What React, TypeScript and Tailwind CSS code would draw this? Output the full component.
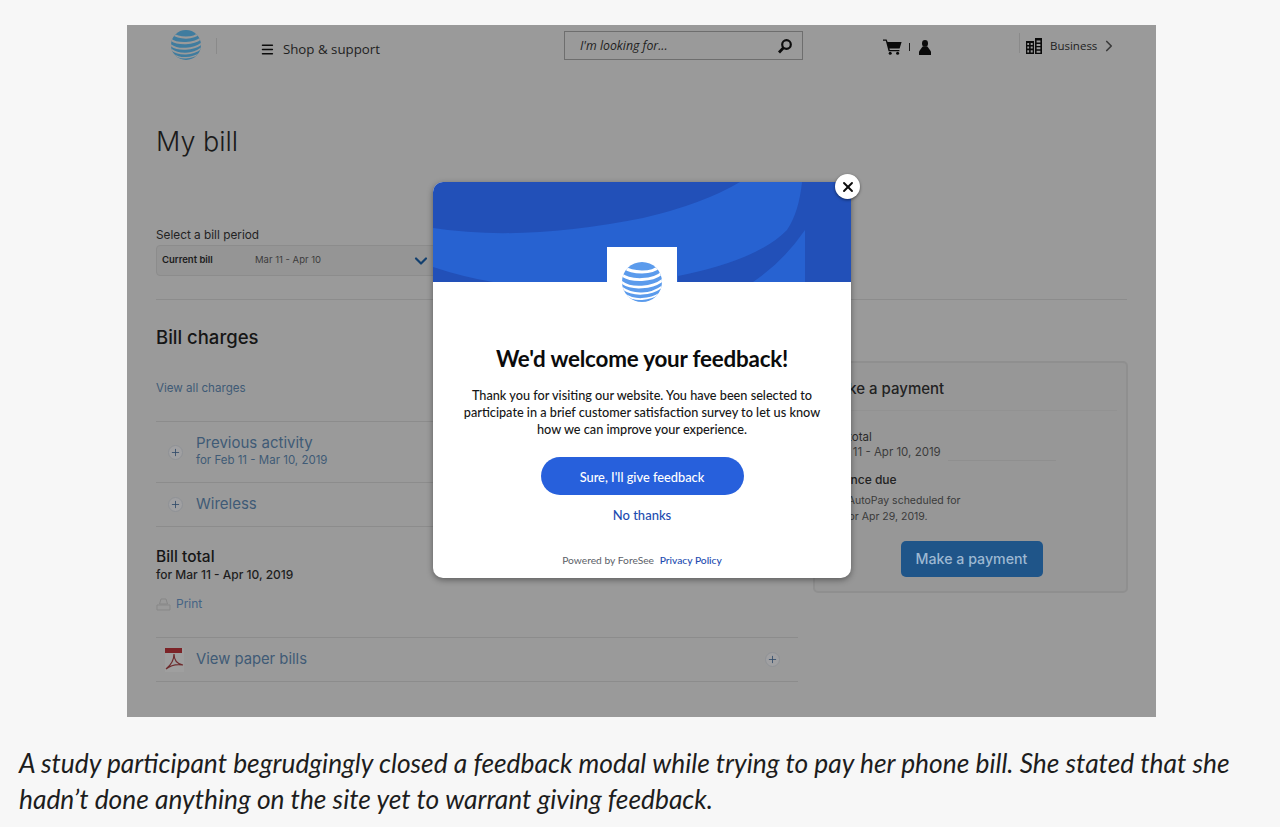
import React from "react";
import { Menu, Plus, ChevronDown, ChevronRight, X } from "lucide-react";

function Globe({ color, gap, size, id }: { color: string; gap: string; size: number; id: string }) {
  return (
    <svg width={size} height={size} viewBox="0 0 40 40" className="shrink-0">
      <defs>
        <clipPath id={id}><circle cx="20" cy="20" r="20" /></clipPath>
      </defs>
      <g clipPath={`url(#${id})`}>
        <rect width="40" height="40" fill={color} />
        <g fill="none" stroke={gap}>
          <path d="M2 5 Q8 10 20 10 Q32 10 38 4" strokeWidth="3" />
          <path d="M-1 12 Q5 18 20 17.5 Q34 17 41 10" strokeWidth="2.8" />
          <path d="M-2 19 Q6 26 20 25 Q34 24 42 17" strokeWidth="2.6" />
          <path d="M0 26 Q8 32 20 31.5 Q32 31 41 24" strokeWidth="2.2" />
          <path d="M2 32 Q10 37.5 20 37 Q30 36.5 39 31" strokeWidth="1.8" />
        </g>
      </g>
    </svg>
  );
}

function PlusCircle() {
  return (
    <span className="flex h-[15px] w-[15px] shrink-0 items-center justify-center rounded-full border border-[#8f9296] bg-[#a0a0a2]">
      <Plus size={11} strokeWidth={1.8} color="#2f4a68" />
    </span>
  );
}

function Row({ className, children }: { className: string; children: React.ReactNode }) {
  return <div className={`flex items-center border-b border-[#8c8c8c] ${className}`}>{children}</div>;
}

export default function App() {
  return (
    <div className="h-[827px] w-[1280px] overflow-hidden bg-[#f7f7f7] pt-[25px]">
      <div className="relative ml-[127px] h-[692px] w-[1029px] overflow-hidden bg-[#9a9a9a] font-['Inter',sans-serif] text-[#1c1c1c]">
        {/* top bar */}
        <header className="flex h-[48px] items-start">
          <div className="ml-[44px] mt-[5px]"><Globe color="#3f7c9f" gap="#9a9a9a" size={30} id="g1" /></div>
          <div className="ml-[15px] mt-[13px] h-[16px] w-px bg-[#8a8a8a]" />
          <div className="ml-[43px] mt-[14px] flex w-[120px] items-center font-['Open_Sans',sans-serif]">
            <Menu size={17} strokeWidth={2.4} color="#0c0c0c" />
            <span className="ml-[8px] whitespace-nowrap text-[13.3px] leading-[20px] text-[#1e1e1e]">Shop &amp; support</span>
          </div>
          <div className="ml-[184px] mt-[6px] flex h-[29px] w-[239px] items-center justify-between border border-[#6e6e6e] pl-[15px] pr-[9px] font-['Open_Sans',sans-serif]">
            <span className="mt-[2px] text-[12.3px] italic text-[#1e1e1e]">I'm looking for...</span>
            <svg width="16" height="16" viewBox="0 0 16 16" fill="none" stroke="#0c0c0c" strokeWidth="2.2">
              <circle cx="9.5" cy="6.5" r="4.3" />
              <path d="M6.5 9.8 L2 14.5" strokeWidth="2.8" />
            </svg>
          </div>
          <div className="ml-[80px] mt-[14px] flex items-center">
            <svg width="19" height="16" viewBox="0 0 19 16" fill="#0a0a0a">
              <path d="M0 .5h3.6l1 2.5H18.6l-2 6.6H6.4l.4 1.4h9.6v1.3H5.6L2.8 1.8H0z" />
              <circle cx="7.2" cy="14.3" r="1.5" />
              <circle cx="14.6" cy="14.3" r="1.5" />
            </svg>
            <span className="ml-[7px] h-[8px] w-px bg-[#1a1a1a]" />
            <svg className="ml-[9px]" width="12" height="15" viewBox="0 0 12 15" fill="#0a0a0a">
              <ellipse cx="6" cy="3.4" rx="3" ry="3.4" />
              <path d="M3.6 6.4h4.8L12 11.5V15H0v-3.5z" />
            </svg>
          </div>
          <div className="ml-[88px] mt-[8px] h-[20px] w-px bg-[#8a8a8a]" />
          <div className="ml-[6px] mt-[12px] flex items-center font-['Open_Sans',sans-serif]">
            <svg width="16" height="16" viewBox="0 0 16 16" fill="#0a0a0a">
              <path fillRule="evenodd" d="M0 3h8v13H0zM1.3 5v2h1.8V5zm3.4 0v2h2V5zM1.3 8.6v2h1.8v-2zm3.4 0v2h2v-2zM1.3 12.2v2.2h1.8v-2.2zm3.4 0v2.2h2v-2.2zM9 0h7v16H9zm1.6 2.5v2h3.8v-2zm0 3.4v2h3.8v-2zm0 3.4v2h3.8v-2zm0 3.4v2h3.8v-2z" />
            </svg>
            <span className="ml-[8px] text-[11.5px] text-[#1e1e1e]">Business</span>
            <ChevronRight className="ml-[3px]" size={18} strokeWidth={2.2} color="#3a3a3a" />
          </div>
        </header>

        {/* page */}
        <div className="ml-[29px] w-[971px]">
          <h1 className="mt-[51px] h-[36px] text-[27px] font-light leading-[36px] text-[#1a1a1a]">My bill</h1>
          <div className="mt-[67px] text-[11.8px] leading-[16px] text-[#232323]">Select a bill period</div>
          <div className="mt-[2px] flex h-[31px] w-[290px] items-center rounded-[4px] border border-[#8c8c8c] bg-[#959595] pl-[5px]">
            <span className="w-[93px] shrink-0 whitespace-nowrap text-[9.5px] font-semibold text-[#1c1c1c]">Current bill</span>
            <span className="shrink-0 whitespace-nowrap text-[9.5px] text-[#3c3c3c]">Mar 11 - Apr 10</span>
            <ChevronDown className="ml-[90px] shrink-0" size={20} strokeWidth={2.6} color="#123f6e" />
          </div>
          <div className="mt-[23px] border-t border-[#8c8c8c]" />

          <div className="flex justify-between">
            <div className="w-[642px]">
              <h2 className="mt-[25px] h-[24px] text-[18.5px] font-medium leading-[24px] text-[#161616]">Bill charges</h2>
              <a className="mt-[31px] block h-[16px] text-[11.6px] leading-[16px] text-[#3f5a76]">View all charges</a>
              <Row className="mt-[25px] h-[62px] border-t pl-[12px]">
                <PlusCircle />
                <div className="ml-[13px] -mt-[4px] text-[#3f5a76]">
                  <div className="text-[15px] leading-[19px]">Previous activity</div>
                  <div className="text-[11.5px] leading-[16px]">for Feb 11 - Mar 10, 2019</div>
                </div>
              </Row>
              <Row className="h-[44px] pl-[12px]">
                <PlusCircle />
                <span className="ml-[13px] text-[15px] text-[#3f5a76]">Wireless</span>
              </Row>
              <div className="mt-[20px] text-[15.5px] font-medium leading-[19px] text-[#161616]">Bill total</div>
              <div className="text-[12px] font-medium leading-[17px] text-[#1e1e1e]">for Mar 11 - Apr 10, 2019</div>
              <div className="mt-[13px] flex h-[16px] items-center">
                <svg width="15" height="13" viewBox="0 0 15 13" fill="none" stroke="#878787" strokeWidth="1">
                  <path d="M5 1h5l1.5 5h-8zM1 7h13v5H1z" />
                </svg>
                <span className="ml-[5px] text-[12px] text-[#456485]">Print</span>
              </div>
              <Row className="mt-[25px] h-[45px] border-t pl-[8px] pr-[18px]">
                <svg width="21" height="26" viewBox="0 0 21 26">
                  <rect x="1" y="1" width="19" height="24" fill="#9f9f9f" />
                  <rect x="1" y="1" width="17" height="5" fill="#7c2327" />
                  <path d="M2 22 C7 18 10 12 10 7 C10 13 13 17 19 18 C13 17 7 18 2 22Z" fill="none" stroke="#6e2b2d" strokeWidth="1.2" />
                </svg>
                <span className="ml-[11px] flex-1 text-[14.8px] text-[#3f5a76]">View paper bills</span>
                <PlusCircle />
              </Row>
            </div>

            <aside className="mr-[-1px] mt-[61px] h-[232px] w-[315px] rounded-[5px] border-2 border-[#8f8f8f] bg-[#979797] pl-[11px] pr-[9px]">
              <div className="h-[48px] border-b border-[#929292] text-[15px] font-medium leading-[52px] text-[#222]">Make a payment</div>
              <div className="ml-[3px] mt-[18px] text-[11.5px] leading-[16px] text-[#2a2a2a]">Bill total</div>
              <div className="-ml-[16px] flex items-end">
                <span className="whitespace-nowrap text-[11.5px] leading-[15px] text-[#3c3c3c]">for Mar 11 - Apr 10, 2019</span>
                <span className="ml-[7px] mb-[-1px] h-px w-[108px] bg-[#8f8f8f]" />
              </div>
              <div className="mt-[12px] text-[12px] font-medium leading-[16px] text-[#222]">Balance due</div>
              <div className="mt-[5px] whitespace-nowrap text-[10.5px] leading-[16px] text-[#3a3a3a]">
                <div className="-ml-[4px]">Your AutoPay scheduled for</div>
                <div className="ml-[19px]">for Apr 29, 2019.</div>
              </div>
              <div className="mt-[16px] flex justify-center">
                <button className="h-[36px] w-[142px] rounded-[5px] bg-[#1f5589] text-[14.2px] font-medium text-[#9db8d2]">Make a payment</button>
              </div>
            </aside>
          </div>
        </div>

        {/* modal */}
        <div className="absolute left-[306px] top-[157px] h-[396px] w-[418px] rounded-[10px] bg-white font-['Lato',sans-serif] shadow-[0_2px_6px_rgba(0,0,0,0.4)]">
          <div className="relative h-[100px] overflow-hidden rounded-t-[10px] bg-[#2250b8]">
            <svg className="absolute inset-0" width="418" height="100" viewBox="0 0 418 100">
              <path d="M0 46 Q90 60 210 36 Q270 22 307 0 L369 0 Q366 30 354 48 Q325 78 245 94 L245 100 L60 100 Q30 95 0 85Z" fill="#2762d1" />
              <path d="M320 100 Q350 80 372 48 L372 100Z" fill="#2762d1" />
            </svg>
            <div className="absolute left-[174px] top-[65px] h-[35px] w-[70px] bg-white" />
          </div>
          <div className="absolute left-[189px] top-[80px]"><Globe color="#5b9bec" gap="#ffffff" size={40} id="g2" /></div>

          <div className="flex flex-col items-center text-center">
            <h3 className="mt-[63px] whitespace-nowrap text-[22.4px] font-bold leading-[28px] tracking-[-0.2px] text-[#0b0b0b]">We'd welcome your feedback!</h3>
            <p className="mt-[14px] w-[370px] text-[12.7px] font-medium leading-[17px] text-[#161616]">Thank you for visiting our website. You have been selected to participate in a brief customer satisfaction survey to let us know how we can improve your experience.</p>
            <button className="mt-[19px] h-[38px] w-[203px] rounded-full bg-[#2760dc] pt-[3px] text-[12.8px] font-medium text-white">Sure, I'll give feedback</button>
            <a className="mt-[12px] text-[13px] font-medium leading-[17px] text-[#1d4cb0]">No thanks</a>
            <div className="mt-[29px] text-[10.25px] leading-[14px] text-[#5c6168]">Powered by ForeSee <span className="ml-[3px] font-medium text-[#1d4cb0]">Privacy Policy</span></div>
          </div>
        </div>
        <button className="absolute left-[708px] top-[149px] flex h-[25px] w-[25px] items-center justify-center rounded-full bg-white shadow-[0_1px_3px_rgba(0,0,0,0.5)]">
          <X size={16} strokeWidth={2.8} color="#0c0c0c" />
        </button>
      </div>

      <p className="ml-[19px] mt-[28px] w-[1245px] font-['Lato',sans-serif] text-[26.35px] italic leading-[36px] text-[#1d1d1d]">
        A study participant begrudgingly closed a feedback modal while trying to pay her phone bill. She stated that she hadn’t done anything on the site yet to warrant giving feedback.
      </p>
    </div>
  );
}
